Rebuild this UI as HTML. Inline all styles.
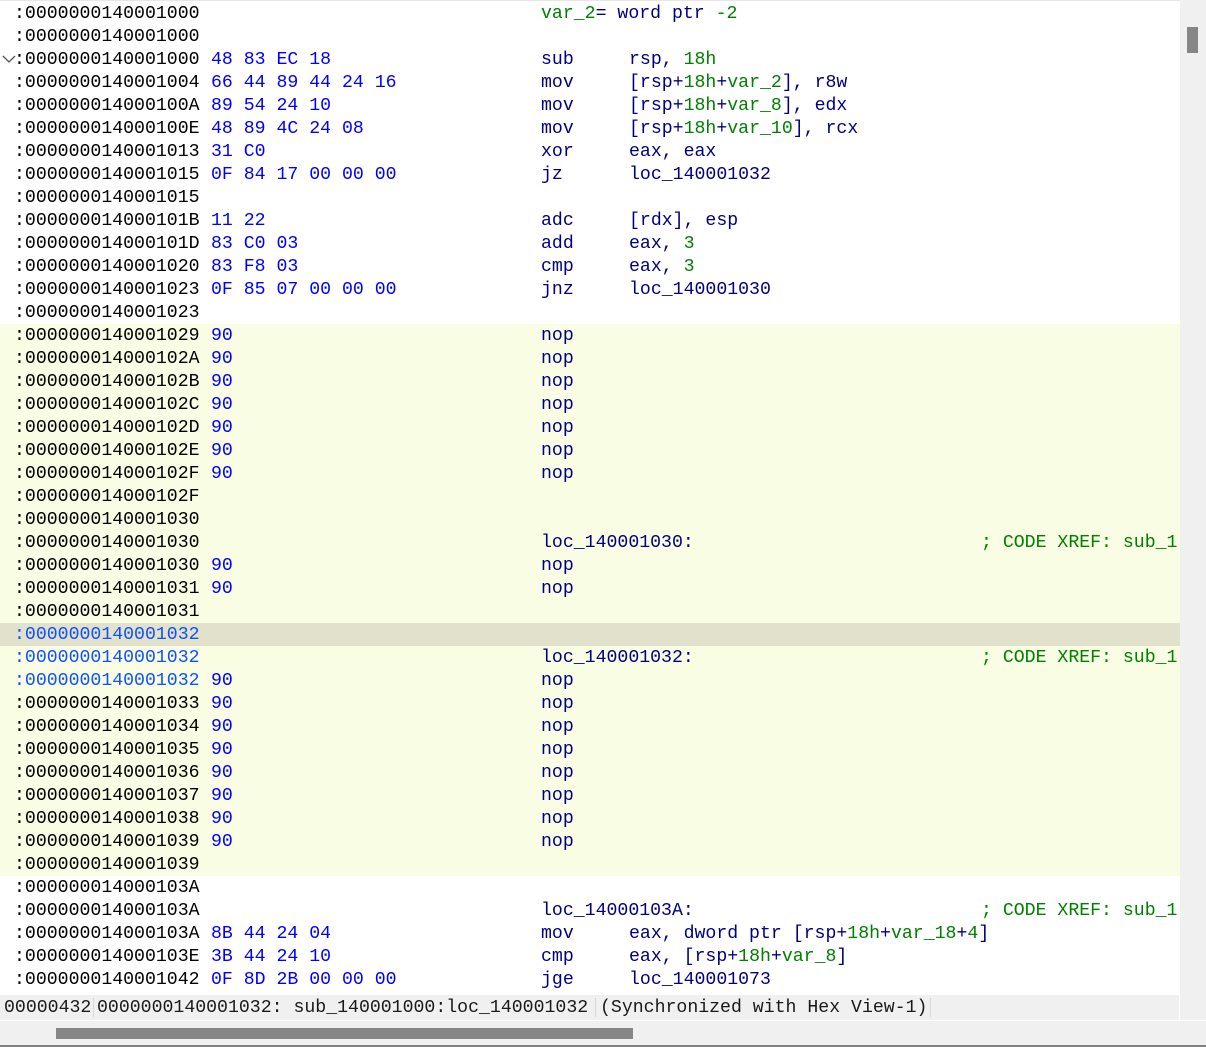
<!DOCTYPE html>
<html><head><meta charset="utf-8"><style>
html,body{margin:0;padding:0;width:1206px;height:1047px;overflow:hidden;background:#fff;}
#v{position:absolute;left:0;top:0;width:1180px;height:995px;background:#fff;border-top:1px solid #e6e6e6;box-sizing:border-box;overflow:hidden;}
#w{position:absolute;left:0;top:0;width:1180px;height:995px}
.r{position:absolute;left:0;width:1180px;height:23px;font-family:"Liberation Mono",monospace;font-size:18.2px;line-height:23px;white-space:pre;color:#000;}
.r span{position:absolute;top:1px;}
.a{left:14px}.b{left:211px;color:#0000ff}.m{left:541px;color:#000080}.o{left:629px;color:#000080}.c{left:981px;color:#008000}
.g{color:#008000;position:static!important}
.y{background:#f9fde3}
.h{background:#e1e1cc}
.ab{color:#1050ff}
#vs{position:absolute;left:1180px;top:0;width:26px;height:1020px;background:#f0f0f0}
#vt{position:absolute;left:1187px;top:27px;width:11px;height:26px;background:#868686}
#sb{position:absolute;left:0;top:995px;width:1179px;height:25px;background:#f0f0f0;border-bottom:1px solid #fff;font-family:"Liberation Mono",monospace;font-size:18.2px;line-height:25px;white-space:pre;color:#1a1a1a}
#sb span{position:absolute;top:1px}
.sep{position:absolute;top:3px;width:1px;height:19px;background:#d8d8d8}
#hs{position:absolute;left:0;top:1021px;width:1206px;height:24px;background:#f0f0f0;border-bottom:2px solid #808080}
#ht{position:absolute;left:56px;top:1028px;width:577px;height:11px;background:#868686}
</style></head><body>
<div id="v"><div id="w" style="top:1px">
<div class="r" style="top:0px"><span class="a">:0000000140001000</span><span class="m"><span class="g">var_2</span>= word ptr <span class="g">-2</span></span></div>
<div class="r" style="top:23px"><span class="a">:0000000140001000</span></div>
<div class="r" style="top:46px"><span class="a">:0000000140001000</span><span class="b">48 83 EC 18</span><span class="m">sub</span><span class="o">rsp, <span class="g">18h</span></span></div>
<div class="r" style="top:69px"><span class="a">:0000000140001004</span><span class="b">66 44 89 44 24 16</span><span class="m">mov</span><span class="o">[rsp+<span class="g">18h</span>+<span class="g">var_2</span>], r8w</span></div>
<div class="r" style="top:92px"><span class="a">:000000014000100A</span><span class="b">89 54 24 10</span><span class="m">mov</span><span class="o">[rsp+<span class="g">18h</span>+<span class="g">var_8</span>], edx</span></div>
<div class="r" style="top:115px"><span class="a">:000000014000100E</span><span class="b">48 89 4C 24 08</span><span class="m">mov</span><span class="o">[rsp+<span class="g">18h</span>+<span class="g">var_10</span>], rcx</span></div>
<div class="r" style="top:138px"><span class="a">:0000000140001013</span><span class="b">31 C0</span><span class="m">xor</span><span class="o">eax, eax</span></div>
<div class="r" style="top:161px"><span class="a">:0000000140001015</span><span class="b">0F 84 17 00 00 00</span><span class="m">jz</span><span class="o">loc_140001032</span></div>
<div class="r" style="top:184px"><span class="a">:0000000140001015</span></div>
<div class="r" style="top:207px"><span class="a">:000000014000101B</span><span class="b">11 22</span><span class="m">adc</span><span class="o">[rdx], esp</span></div>
<div class="r" style="top:230px"><span class="a">:000000014000101D</span><span class="b">83 C0 03</span><span class="m">add</span><span class="o">eax, <span class="g">3</span></span></div>
<div class="r" style="top:253px"><span class="a">:0000000140001020</span><span class="b">83 F8 03</span><span class="m">cmp</span><span class="o">eax, <span class="g">3</span></span></div>
<div class="r" style="top:276px"><span class="a">:0000000140001023</span><span class="b">0F 85 07 00 00 00</span><span class="m">jnz</span><span class="o">loc_140001030</span></div>
<div class="r" style="top:299px"><span class="a">:0000000140001023</span></div>
<div class="r y" style="top:322px"><span class="a">:0000000140001029</span><span class="b">90</span><span class="m">nop</span></div>
<div class="r y" style="top:345px"><span class="a">:000000014000102A</span><span class="b">90</span><span class="m">nop</span></div>
<div class="r y" style="top:368px"><span class="a">:000000014000102B</span><span class="b">90</span><span class="m">nop</span></div>
<div class="r y" style="top:391px"><span class="a">:000000014000102C</span><span class="b">90</span><span class="m">nop</span></div>
<div class="r y" style="top:414px"><span class="a">:000000014000102D</span><span class="b">90</span><span class="m">nop</span></div>
<div class="r y" style="top:437px"><span class="a">:000000014000102E</span><span class="b">90</span><span class="m">nop</span></div>
<div class="r y" style="top:460px"><span class="a">:000000014000102F</span><span class="b">90</span><span class="m">nop</span></div>
<div class="r y" style="top:483px"><span class="a">:000000014000102F</span></div>
<div class="r y" style="top:506px"><span class="a">:0000000140001030</span></div>
<div class="r y" style="top:529px"><span class="a">:0000000140001030</span><span class="m">loc_140001030:</span><span class="c">; CODE XREF: sub_1</span></div>
<div class="r y" style="top:552px"><span class="a">:0000000140001030</span><span class="b">90</span><span class="m">nop</span></div>
<div class="r y" style="top:575px"><span class="a">:0000000140001031</span><span class="b">90</span><span class="m">nop</span></div>
<div class="r y" style="top:598px"><span class="a">:0000000140001031</span></div>
<div class="r h" style="top:621px"><span class="a ab">:0000000140001032</span></div>
<div class="r y" style="top:644px"><span class="a ab">:0000000140001032</span><span class="m">loc_140001032:</span><span class="c">; CODE XREF: sub_1</span></div>
<div class="r y" style="top:667px"><span class="a ab">:0000000140001032</span><span class="b">90</span><span class="m">nop</span></div>
<div class="r y" style="top:690px"><span class="a">:0000000140001033</span><span class="b">90</span><span class="m">nop</span></div>
<div class="r y" style="top:713px"><span class="a">:0000000140001034</span><span class="b">90</span><span class="m">nop</span></div>
<div class="r y" style="top:736px"><span class="a">:0000000140001035</span><span class="b">90</span><span class="m">nop</span></div>
<div class="r y" style="top:759px"><span class="a">:0000000140001036</span><span class="b">90</span><span class="m">nop</span></div>
<div class="r y" style="top:782px"><span class="a">:0000000140001037</span><span class="b">90</span><span class="m">nop</span></div>
<div class="r y" style="top:805px"><span class="a">:0000000140001038</span><span class="b">90</span><span class="m">nop</span></div>
<div class="r y" style="top:828px"><span class="a">:0000000140001039</span><span class="b">90</span><span class="m">nop</span></div>
<div class="r y" style="top:851px"><span class="a">:0000000140001039</span></div>
<div class="r" style="top:874px"><span class="a">:000000014000103A</span></div>
<div class="r" style="top:897px"><span class="a">:000000014000103A</span><span class="m">loc_14000103A:</span><span class="c">; CODE XREF: sub_1</span></div>
<div class="r" style="top:920px"><span class="a">:000000014000103A</span><span class="b">8B 44 24 04</span><span class="m">mov</span><span class="o">eax, dword ptr [rsp+<span class="g">18h</span>+<span class="g">var_18</span>+<span class="g">4</span>]</span></div>
<div class="r" style="top:943px"><span class="a">:000000014000103E</span><span class="b">3B 44 24 10</span><span class="m">cmp</span><span class="o">eax, [rsp+<span class="g">18h</span>+<span class="g">var_8</span>]</span></div>
<div class="r" style="top:966px"><span class="a">:0000000140001042</span><span class="b">0F 8D 2B 00 00 00</span><span class="m">jge</span><span class="o">loc_140001073</span></div>
</div>
<svg style="position:absolute;left:0;top:0" width="20" height="70"><path d="M3 55 L9 61 L15 55" fill="none" stroke="#555" stroke-width="1.3"/></svg>
</div>
<div id="vs"></div><div id="vt"></div>
<div id="sb"><span style="left:4px">00000432</span><div class="sep" style="left:93px"></div><span style="left:97px">0000000140001032: sub_140001000:loc_140001032</span><div class="sep" style="left:595px"></div><span style="left:600px">(Synchronized with Hex View-1)</span><div class="sep" style="left:930px"></div></div>
<div id="hs"></div><div id="ht"></div>
</body></html>
